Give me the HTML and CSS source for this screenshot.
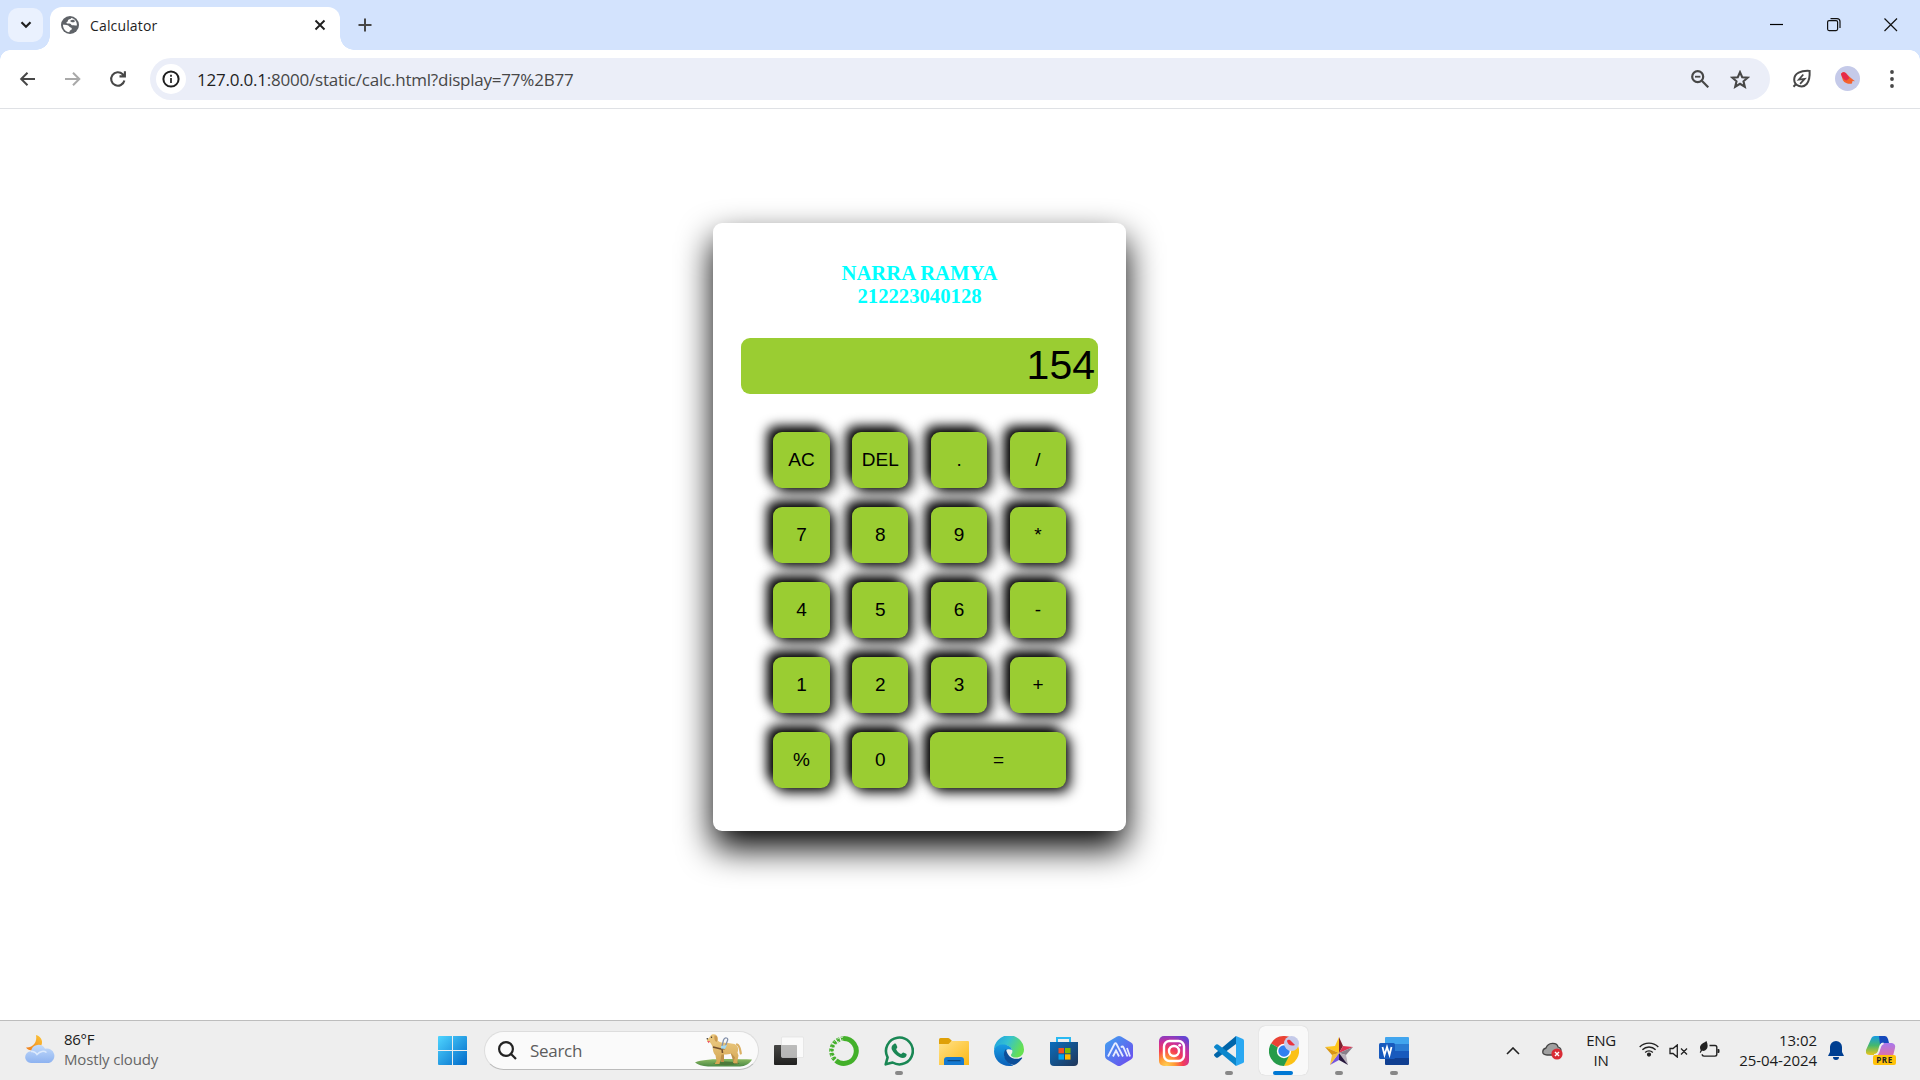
FILE: index.html
```html
<!DOCTYPE html>
<html lang="en">
<head>
<meta charset="utf-8">
<title>Calculator</title>
<link rel="stylesheet" href="styles.css">
</head>
<body>
<header class="tabstrip">
  <div class="tab-search"><svg width="12" height="8" viewBox="0 0 12 8"><path d="M1.500 1.200 6 5.700l4.500-4.500" fill="none" stroke="#1f1f1f" stroke-width="2.200"/></svg></div>
  <div class="tab">
    <svg class="favicon" width="18" height="18" viewBox="0 0 18 18"><circle cx="9" cy="9" r="9" fill="#5f6368"/><path d="M2 8.500C2.300 9 5 8.700 6.600 9.200c1.600.5 1.700 1.900 3 2.200 1.200.3 1.500 1 1 2-.6 1-1.800.7-2 1.800l-.2 1C4.500 16 1.800 12.500 2 8.500z" fill="#fff"/><path d="M10.200 2c-.2 1-1.700 1.300-2.400 1.600-1.500.7-.3 2-1.800 2.400-.9.300-.7 1.500.3 1.500 1.500 0 3-.5 3.500.5.400.9 1.200 1.500 2.400 1.300 1.300-.2 1.600.5 3.700.2C16.200 5.500 13.500 2.500 10.200 2z" fill="#fff"/><path d="M9.500 4.500c1.500-.8 3.500-1.200 4.200.3.600 1.200-.8 1.500-1.800 1.500s-3.300-.7-2.400-1.800z" fill="#5f6368"/></svg>
    <span class="tab-title">Calculator</span>
    <svg class="tab-close" width="12" height="12" viewBox="0 0 12 12"><path d="M1.500 1.500l9 9m0-9l-9 9" stroke="#1f1f1f" stroke-width="1.900"/></svg>
  </div>
  <svg class="new-tab" width="14" height="14" viewBox="0 0 14 14"><path d="M7 .5v13M.5 7h13" stroke="#474747" stroke-width="2"/></svg>
  <div class="window-controls">
    <svg width="14" height="14" viewBox="0 0 14 14"><path d="M0 6.500h13" stroke="#000" stroke-width="1.200"/></svg>
    <svg width="14" height="14" viewBox="0 0 14 14" fill="none" stroke="#111" stroke-width="1.200"><rect x=".6" y="2.600" width="10" height="10" rx="1.500"/><path d="M3.500.6h6.500a3 3 0 0 1 3 3V10"/></svg>
    <svg width="14" height="14" viewBox="0 0 14 14"><path d="M.5.5l12.500 12.500m0-12.500L.5 13" stroke="#111" stroke-width="1.200"/></svg>
  </div>
</header>
<nav class="toolbar">
  <div class="nav-buttons">
    <svg width="18" height="18" viewBox="0 0 18 18" fill="none" stroke="#474747" stroke-width="2"><path d="M16 9H2.500M8.500 2.700 2.200 9l6.300 6.300"/></svg>
    <svg width="18" height="18" viewBox="0 0 18 18" fill="none" stroke="#a9a9a9" stroke-width="2"><path d="M1 9h14M9 2.700 15.300 9 9 15.300"/></svg>
    <svg width="18" height="18" viewBox="0 0 18 18" fill="none" stroke="#474747" stroke-width="2.100"><path d="M15.400 10.500A6.700 6.700 0 1 1 13.700 4.300l1.800 1.800M15.900 1.200v5.200h-5.400"/></svg>
  </div>
  <div class="omnibox">
    <span class="site-info"><svg width="18" height="18" viewBox="0 0 18 18"><circle cx="9" cy="9" r="7.600" fill="none" stroke="#1f1f1f" stroke-width="2"/><path d="M9 8v5M9 4.800v1.900" stroke="#1f1f1f" stroke-width="1.700"/></svg></span>
    <span class="url"><b>127.0.0.1</b>:8000/static/calc.html?display=77%2B77</span>
    <svg class="zoom-icon" width="18" height="18" viewBox="0 0 18 18" fill="none" stroke="#474747" stroke-width="2.200"><circle cx="6.700" cy="6.700" r="5.500"/><path d="M10.800 10.800l6.500 6.500"/><path d="M4 6.700h5.400" stroke-width="1.800"/></svg>
    <svg class="star-icon" width="20" height="19" viewBox="0 0 20 19" fill="none" stroke="#474747" stroke-width="2.100"><path d="M10 2.200l2.200 5 5.500.5-4.200 3.600 1.300 5.400-4.800-2.900-4.800 2.900 1.300-5.400L2.300 7.700l5.500-.5z"/></svg>
  </div>
  <svg class="leaf" width="20" height="20" viewBox="0 0 20 20" fill="none" stroke="#474747" stroke-width="2"><path d="M17.600 1.900C9 1.400 2.200 4 2.200 10.500c0 7 8.800 8.800 12.500 4.500 3-3.500 3.200-8 2.900-13.100zM4.500 14.500l-3 3.200"/><path d="M11.300 5.500 6.800 10.600l5.900-.8-4.600 5" stroke-width="1.700"/></svg>
  <svg class="avatar" width="25" height="25" viewBox="0 0 25 25"><circle cx="12.500" cy="12.500" r="12.500" fill="#c5cae9"/><path d="M6 8c1-2 3.500-2.500 5-.8l4 4 5 4-2.500-.2-.5 2.500c-4 .8-8.500-.5-9.500-4.500z" fill="#f4622e"/><path d="M6 8c1-2 3.500-2.500 5-.8L14.500 12l-3 2.500C8.500 14 7 11 6 8z" fill="#e6294b"/></svg>
  <svg class="menu" width="4" height="18" viewBox="0 0 4 18" fill="#474747"><circle cx="2" cy="2" r="1.900"/><circle cx="2" cy="9" r="1.900"/><circle cx="2" cy="16" r="1.900"/></svg>
</nav>
<main class="page">
  <section class="calculator">
    <h3 class="owner">NARRA RAMYA<br>212223040128</h3>
    <output class="display">154</output>
    <div class="keys">
      <div class="row"><button>AC</button><button>DEL</button><button>.</button><button>/</button></div>
      <div class="row"><button>7</button><button>8</button><button>9</button><button>*</button></div>
      <div class="row"><button>4</button><button>5</button><button>6</button><button>-</button></div>
      <div class="row"><button>1</button><button>2</button><button>3</button><button>+</button></div>
      <div class="row"><button>%</button><button>0</button><button class="equals">=</button></div>
    </div>
  </section>
</main>
<footer class="taskbar">
  <div class="weather">
    <svg width="30" height="30" viewBox="0 0 30 30"><defs><linearGradient id="moon" x1="0" y1="1" x2="1" y2="0"><stop offset="0" stop-color="#f07b1c"/><stop offset="1" stop-color="#fcc735"/></linearGradient><linearGradient id="cloud" x1="0" y1="0" x2="0" y2="1"><stop offset="0" stop-color="#c4dcfb"/><stop offset="1" stop-color="#8db2f0"/></linearGradient></defs><path d="M11 1c6 1.500 8 8 4 12.500S3 17 1 13.500C8 14 12.500 8 11 1z" fill="url(#moon)"/><path d="M6 29a5.800 5.800 0 0 1 0-11.700 7.500 7.500 0 0 1 14-2.500A7.200 7.200 0 0 1 24 29z" fill="url(#cloud)"/><path d="M6 17.500c3-.5 5 1 6 3 3-3.500 7-4 9.500-2" fill="none" stroke="#dceafd" stroke-width="1.500"/></svg>
    <div class="weather-text"><span class="temp">86°F</span><span class="sky">Mostly cloudy</span></div>
  </div>
  <div class="apps">
    <svg class="start" width="29" height="29" viewBox="0 0 29 29"><defs><linearGradient id="win" gradientUnits="userSpaceOnUse" x1="0" y1="0" x2="29" y2="29"><stop offset="0" stop-color="#4fd5ff"/><stop offset="1" stop-color="#0069c9"/></linearGradient></defs><path d="M1 0h13v14H0V1q0-1 1-1zM15 0h13q1 0 1 1v13H15zM0 15h14v14H1q-1 0-1-1zM15 15h14v13q0 1-1 1H15z" fill="url(#win)"/></svg>
    <div class="search">
      <svg width="19" height="19" viewBox="0 0 19 19" fill="none" stroke="#222" stroke-width="2.200"><circle cx="8" cy="8" r="6.900"/><path d="M12.800 12.800l5.200 5.200"/></svg>
      <span>Search</span>
      <svg class="dog" width="57" height="33" viewBox="0 0 57 33"><defs><linearGradient id="grass" x1="0" y1="0" x2="0" y2="1"><stop offset="0" stop-color="#8cba62"/><stop offset="1" stop-color="#4d8a45"/></linearGradient><linearGradient id="fur" x1="0" y1="0" x2="0" y2="1"><stop offset="0" stop-color="#eccb82"/><stop offset="1" stop-color="#d4a552"/></linearGradient></defs><path d="M0 28.500C8 24 40 25 57 25.500c-2 4-7 7-12 7H13C7 32 3 31 0 28.500z" fill="url(#grass)"/><path d="M18 29.500c7-3 20-2.500 27 0-6 2-20 2.500-27 0z" fill="#4d7a3b"/><path d="M35 17l4 12.500h4l-3-10z" fill="#bd9048"/><path d="M24 20l2 8h3l0-8z" fill="#bd9048"/><path d="M14 7.500c2 1.500 2.500 3 3.500 5.500.5 3 .5 6 3 8.500l1 5.500-2 3h5l2-9.500c4 .3 7 0 10-1l3.500 4-2 5.500h4l1.500-7.500-1-3c1.500-3.500.5-7-3-8.500-4-1-9-1-13-1.500-2.500-.5-4.500-2-5-5z" fill="url(#fur)"/><path d="M42 10.500c3 1 3 5 3.800 9" fill="none" stroke="#dbb064" stroke-width="2.200" stroke-linecap="round"/><path d="M12 5c3-.5 3-4.500 6-4.800 4-.3 5.500 3 4.500 7L21 11c-3 0-4-1.500-5-3-2 .3-3.500.2-4-.6z" fill="#e8c47a"/><path d="M19.500 1.500c3-.5 4 3.500 2 6.500-2-1-2.500-3.500-2-6.500z" fill="#cc9b51"/><circle cx="16.500" cy="3.300" r=".7" fill="#333"/><circle cx="12.300" cy="4.700" r=".8" fill="#333"/><path d="M12.500 7H15l-1.500 2.300z" fill="#ef4a70"/><path d="M18 13l8 2 4-.5m-3 .5.500 4" fill="none" stroke="#73502d" stroke-width="1.600"/><path d="M27 12l1.500-6q1-2.700 3-2t.8 3L30 13" fill="none" stroke="#8390aa" stroke-width="1.300"/><path d="M26 12l6-1-2 4-4-.5z" fill="#a4d8f0"/></svg>
    </div>
    <div class="app"><svg width="30" height="30" viewBox="0 0 30 30"><defs><linearGradient id="tv" x1="0" y1="0" x2="0" y2="1"><stop offset="0" stop-color="#474745"/><stop offset="1" stop-color="#20201f"/></linearGradient></defs><rect y="9" width="23" height="20" rx="1" fill="url(#tv)"/><rect x="7.500" y="1" width="22" height="20.500" rx="1" fill="#fff" fill-opacity=".7" stroke="#ddd" stroke-opacity=".6"/><path d="M8 9h15v12.500H8z" fill="#777" opacity=".15"/></svg></div>
    <div class="app"><svg width="30" height="30" viewBox="0 0 30 30" fill="none" stroke="#43b02a"><path d="M15 2.600a12.400 12.400 0 1 1-8 22" stroke-width="5"/><path d="M15 2.600A12.400 12.400 0 0 0 7 24.600" stroke-width="4.500" stroke-dasharray="3 1.300"/><path d="M14 1.200A13.800 13.800 0 0 0 4 23M14 4A11 11 0 0 0 7 22" stroke="#eee" stroke-width=".8" stroke-dasharray="2 2"/></svg></div>
    <div class="app running"><svg width="30" height="30" viewBox="0 0 30 30"><path d="M1.700 28.300l1.900-7A13.400 13.400 0 1 1 8.600 26.500z" fill="none" stroke="#198754" stroke-width="2.600" stroke-linejoin="round"/><path d="M10 8c1-.7 2-.4 2.300.5l1 2.500c.2 1-1.300 1.700-1.100 2.500 1.100 2.200 2.700 3.600 4.800 4.400.8 0 1.500-1.700 2.300-1.500l2.900 1.400c1 .6.200 2.500-.6 3.200-1.700 1.400-4.200 1-6.300 0-3.400-1.600-6-4.300-7.500-7.500C7 11.300 8 9.200 10 8z" fill="#198754"/></svg></div>
    <div class="app"><svg width="30" height="30" viewBox="0 0 30 30"><defs><linearGradient id="folder" x1="0" y1="0" x2="1" y2="1"><stop offset="0" stop-color="#ffe28a"/><stop offset="1" stop-color="#fdb813"/></linearGradient></defs><path d="M0 10V3.500Q0 2 1.500 2H9q1 0 2 1l1.500 1.500V9z" fill="#dfa007"/><path d="M0 8h9.500l3-3H29q1 0 1 1v23H0z" fill="url(#folder)"/><path d="M5 29v-5q0-3 3-3h14q3 0 3 3v5z" fill="#1479d0"/><path d="M9 24.700h12" stroke="#0a4a84" stroke-width="1.200" stroke-linecap="round"/></svg></div>
    <div class="app"><svg width="30" height="30" viewBox="0 0 30 30"><defs><linearGradient id="e1" x1="0" y1="0" x2="1" y2=".4"><stop offset="0" stop-color="#1b9de2"/><stop offset=".5" stop-color="#35c1d0"/><stop offset="1" stop-color="#66e052"/></linearGradient><linearGradient id="e2" x1="0" y1="0" x2="0" y2="1"><stop offset="0" stop-color="#189de3"/><stop offset="1" stop-color="#0a5fb8"/></linearGradient></defs><path d="M0 15a15 15 0 0 1 30-1.500c0 5.500-4 8-8 8-4.500 0-6-2-4.500-3.500C20 15 17 9 10 9 5 9 1 11 0 15z" fill="url(#e1)"/><path d="M0 15C1 10 5 8.500 9 8.500c5 0 8.500 2.500 9 5.500-6-3-9 2.500-7 7.500 1.500 4 5 6.500 8.500 7.900C9 32 0 25 0 15z" fill="url(#e2)"/><path d="M12 13c-5 5-.5 15.500 8 16 4-1.500 6.500-4.500 8-6.500.5-1-.2-1.200-1-.8-6 3-13.500.3-15-8.700z" fill="#0c4e99"/></svg></div>
    <div class="app"><svg width="30" height="30" viewBox="0 0 30 30"><defs><linearGradient id="store" x1="0" y1="0" x2="1" y2="1"><stop offset="0" stop-color="#0a6ebd"/><stop offset="1" stop-color="#203558"/></linearGradient></defs><path d="M8 8V2h13v6" fill="none" stroke="#29b9f2" stroke-width="2"/><path d="M1 6h28v20q0 4-4 4H5q-4 0-4-4z" fill="url(#store)"/><path fill="#f25022" d="M9.500 12H15v5.300H9.500z"/><path fill="#7fba00" d="M16 12h5.500v5.300H16z"/><path fill="#00a4ef" d="M9.500 18.300H15v5.300H9.500z"/><path fill="#ffb900" d="M16 18.300h5.500v5.300H16z"/></svg></div>
    <div class="app"><svg width="30" height="30" viewBox="0 0 30 30"><defs><linearGradient id="am" x1="0" y1="0" x2="1" y2="1"><stop offset="0" stop-color="#3fa4f0"/><stop offset="1" stop-color="#7046ee"/></linearGradient></defs><path d="M13 .5q2-1 4 0l10 6q2 1 2 3V20q0 2.500-2 3.500l-10 6q-2 1-4 0l-10-6q-2-1-2-3.500V9.500q0-2 2-3z" fill="url(#am)"/><path d="M4 20.500 10.500 8q1-1.500 2 0L19 20.500M9 20.500l3-6 3 6M17 11.500q1.500-2 2.500 0l4 9M23 12l3 8.500" fill="none" stroke="#e8edff" stroke-width="1.800"/></svg></div>
    <div class="app"><svg width="30" height="30" viewBox="0 0 30 30"><defs><radialGradient id="ig" cx=".25" cy="1" r="1.100"><stop offset="0" stop-color="#ffd257"/><stop offset=".25" stop-color="#ff9b34"/><stop offset=".5" stop-color="#f53d55"/><stop offset=".75" stop-color="#c72f9f"/><stop offset="1" stop-color="#6544d2"/></radialGradient></defs><rect width="30" height="30" rx="5" fill="url(#ig)"/><g fill="none" stroke="#fff" stroke-width="2.400"><rect x="5" y="5" width="20" height="20" rx="5.500"/><circle cx="15" cy="15" r="5"/></g><circle cx="20.700" cy="9.300" r="1.400" fill="#fff"/></svg></div>
    <div class="app running"><svg width="30" height="30" viewBox="0 0 30 30"><path d="M22 0v8L4 21.500q-1 .7-2 0L.5 20q-1-1 0-2z" fill="#0065a9"/><path d="M22 30v-8L4 8.500q-1-.7-2 0L.5 10q-1 1 0 2z" fill="#0b86cc"/><path d="M22 0l7 3q1 .5 1 1.500v21q0 1-1 1.500l-7 3z" fill="#2aa8f2"/></svg></div>
    <div class="app active"><svg width="30" height="30" viewBox="0 0 30 30"><path d="M15 15 2 7.500A15 15 0 0 1 28 7.500z" fill="#ea4335"/><path d="M15 15 28 7.500A15 15 0 0 1 15 30l4-10z" fill="#fbc116"/><path d="M2 7.500A15 15 0 0 0 15 30l5.500-11L15 15z" fill="#269b4a"/><circle cx="15" cy="15" r="7.200" fill="#fff"/><circle cx="15" cy="15" r="5.700" fill="#2f7ff0"/><circle cx="22.500" cy="7.500" r="7.500" fill="#c5cae9"/><path d="M18 5c1-2 3-1 4 0l4 4c-4 1.500-7 0-8-4z" fill="#e9333e"/></svg></div>
    <div class="app running"><svg width="30" height="30" viewBox="0 0 30 30"><path d="M15 1v16L1 11l10-1z" fill="#ffc61c"/><path d="M15 1l4 9-4 7z" fill="#7b2331"/><path d="M19 10l10 1-14 6z" fill="#df3452"/><path d="M29 11l-7 8-7-2z" fill="#88808b"/><path d="M22 19l2 10-9-12z" fill="#b7afb9"/><path d="M15 17l9 12-9-5z" fill="#27183d"/><path d="M15 17v7l-9 5z" fill="#7655df"/><path d="M15 17 6 29l2-10z" fill="#f5c23c"/><path d="M1 11l14 6-7 2z" fill="#d99613"/></svg></div>
    <div class="app running"><svg width="30" height="30" viewBox="0 0 30 30"><path d="M6 2q0-1 1-1h22q1 0 1 1v6H6z" fill="#41a5ee"/><path d="M6 8h24v7H6z" fill="#2b7cd3"/><path d="M6 15h24v7H6z" fill="#185abd"/><path d="M6 22h24v6q0 1-1 1H7q-1 0-1-1z" fill="#103f91"/><rect y="7" width="16" height="16" rx="1.500" fill="#185abd"/><path d="M3.500 11l2 8 2.500-8 2.500 8 2-8" fill="none" stroke="#fff" stroke-width="1.800"/></svg></div>
  </div>
  <div class="tray">
    <svg class="chevron" width="14" height="8" viewBox="0 0 14 8"><path d="M1 7l6-6 6 6" fill="none" stroke="#222" stroke-width="1.600"/></svg>
    <svg class="onedrive" width="21" height="18" viewBox="0 0 21 18"><path d="M5 13C-1 13 0 7 4 6c2-6 11-6 12-1 3 1 4 3 2 6l-4 2z" fill="#a0a0a0" stroke="#444" stroke-width="1.300"/><circle cx="15" cy="12" r="5.600" fill="#d92c35"/><path d="M13 10l4 4m0-4l-4 4" stroke="#fff" stroke-width="1.400"/></svg>
    <div class="lang"><span>ENG</span><span>IN</span></div>
    <svg class="wifi" width="20" height="16" viewBox="0 0 20 16" fill="none" stroke="#222" stroke-width="1.400"><path d="M.7 6a13 13 0 0 1 18.600 0M3.400 8.800a9.200 9.200 0 0 1 13.200 0M6.200 11.500a5.300 5.300 0 0 1 7.600 0"/><circle cx="10" cy="13.600" r="1.400" fill="#222"/></svg>
    <svg class="sound" width="19" height="14" viewBox="0 0 19 14" fill="none" stroke="#222" stroke-width="1.300"><path d="M1 4.500h3L8.300.9v12.200L4 9.500H1zM12 4.500l6 6m0-6l-6 6"/></svg>
    <svg class="battery" width="21" height="17" viewBox="0 0 21 17"><path d="M10.500 4.500H16q1.800 0 1.800 1.800v7q0 1.800-1.800 1.800H5q-1.800 0-1.800-1.800" fill="none" stroke="#222" stroke-width="1.400"/><path d="M18.500 8h1q1 0 1 1v2q0 1-1 1h-1z" fill="#222"/><path d="M7.500 0c1.500 3.500 2 7.500-1.500 9.500-1 .6-2 .5-3 .3L1.500 12l-.8-.8 1-2C-.8 4 4 2.500 7.500 0z" fill="#222"/></svg>
    <div class="clock"><span>13:02</span><span>25-04-2024</span></div>
    <svg class="bell" width="16" height="19" viewBox="0 0 16 19" fill="#003f91"><path d="M8 0a6 6 0 0 1 6 6v5l2 4H0l2-4V6a6 6 0 0 1 6-6zM5 16h6a3 3 0 0 1-6 0z"/></svg>
    <div class="copilot"><svg width="30" height="26" viewBox="0 0 30 26"><defs><linearGradient id="ca" x1="0" y1="0" x2="0" y2="1"><stop offset="0" stop-color="#159be3"/><stop offset=".5" stop-color="#45b86d"/><stop offset="1" stop-color="#ecc51a"/></linearGradient><linearGradient id="cb" x1="0" y1="0" x2="0" y2="1"><stop offset="0" stop-color="#a878ed"/><stop offset="1" stop-color="#f26c8e"/></linearGradient></defs><path d="M9 0h9l-5 15q-1 4-4 4H4q-5 0-4-5L5 3q1-3 4-3z" fill="url(#ca)"/><path d="M13 0h6q2 0 3 3l1 4h-6q-2 0-3 2z" fill="#1549bb"/><path d="M18 7h8q4 1 3 5l-2 8q-1 5-5 5H9l5-12q1-6 4-6z" fill="url(#cb)"/><path d="M17.500 7.500c-3 0-3.500 3-4.500 7-.7 3-2 4.500-5 4.500" fill="none" stroke="#eee" stroke-width="1.800"/></svg><span class="pre">PRE</span></div>
  </div>
</footer>
</body>
</html>
```
FILE: styles.css
```css
* { box-sizing: border-box; }
body { margin: 0; width: 1920px; height: 1080px; overflow: hidden; display: flex; flex-direction: column; background: #fff; font-family: "Open Sans", "Noto Sans", sans-serif; }
svg { display: block; flex: none; }

/* tab strip */
.tabstrip { height: 50px; flex: none; background: #d3e3fd; display: flex; align-items: flex-start; padding-left: 8px; }
.tab-search { width: 35px; height: 34px; margin-top: 8px; border-radius: 10px; background: #eaf1fe; display: flex; align-items: center; justify-content: center; }
.tab { position: relative; width: 290px; height: 43px; margin: 7px 0 0 7px; padding: 0 14px 7px 11px; border-radius: 12px 12px 0 0; background: #fff; display: flex; align-items: center; }
.tab::before, .tab::after { content: ""; position: absolute; bottom: 0; width: 14px; height: 14px; }
.tab::before { left: -14px; background: radial-gradient(circle at 0 0, transparent 13.5px, #fff 14px); }
.tab::after { right: -14px; background: radial-gradient(circle at 100% 0, transparent 13.5px, #fff 14px); }
.tab-title { margin-left: 11px; font-size: 14px; letter-spacing: .15px; color: #1f1f1f; flex: 1; }
.new-tab { margin: 18px 0 0 18px; }
.window-controls { margin: 18px 22px 0 auto; display: flex; gap: 43px; }

/* toolbar */
.toolbar { height: 59px; flex: none; background: #fff; border-bottom: 1px solid #dfe1e5; display: flex; align-items: center; padding-left: 19px; position: relative; }
.toolbar::before, .toolbar::after { content: ""; position: absolute; top: 0; width: 10px; height: 10px; }
.toolbar::before { left: 0; background: radial-gradient(circle at 100% 100%, transparent 9.5px, #d3e3fd 10px); }
.toolbar::after { right: 0; background: radial-gradient(circle at 0 100%, transparent 9.5px, #d3e3fd 10px); }
.nav-buttons { display: flex; gap: 27px; width: 131px; }
.omnibox { width: 1620px; height: 42px; border-radius: 21px; background: #ebeef8; display: flex; align-items: center; padding: 0 20px 0 6px; }
.site-info { width: 30px; height: 30px; border-radius: 50%; background: #fff; display: flex; align-items: center; justify-content: center; }
.url { margin-left: 11px; font-size: 17px; letter-spacing: -.22px; color: #474747; flex: 1; }
.url b { font-weight: 400; color: #1f1f1f; }
.star-icon { margin-left: 21px; }
.leaf { margin-left: 22px; }
.avatar { margin-left: 23px; margin-top: -1px; }
.menu { margin-left: 30px; }

/* calculator */
.page { flex: 1; display: flex; align-items: flex-start; justify-content: center; padding-top: 114px; padding-right: 81px; }
.calculator { width: 413px; height: 608px; border-radius: 9px; box-shadow: 0 16.875px 33.75px #000; padding: 39px 28px 0; }
.owner { margin: 0; text-align: center; color: #0ff; font: bold 20.7px/23px "Liberation Serif", serif; }
.display { display: block; width: 357px; height: 56px; margin-top: 30px; padding-right: 3px; border-radius: 9px; background: #9acd32; text-align: right; font: 41px/55px "Liberation Sans", sans-serif; color: #000; }
.keys { margin: 38px 32px 0; display: flex; flex-direction: column; gap: 18.75px; }
.row { display: flex; gap: 22.6px; padding-left: .3px; }
.row button { width: 56.25px; height: 56.25px; flex: none; padding: 0; border: 0; border-radius: 9px; background: #9acd32; font: 19px "Liberation Sans", sans-serif; color: #000; box-shadow: -6px -6px 12px #000, 3.6px 3.6px 13px #000; }
.row .equals { width: 136px; margin-left: -.5px; }

/* taskbar */
.taskbar { height: 60px; flex: none; background: #eee; border-top: 1px solid #bdbdbd; display: flex; align-items: center; position: relative; }
.weather { width: 438px; padding-left: 25px; display: flex; gap: 9px; align-items: center; }
.weather svg { margin-top: -3px; }
.weather-text { display: flex; flex-direction: column; margin-top: -4px; font-size: 15px; line-height: 20px; color: #1b1b1b; }
.temp { letter-spacing: -.3px; }
.sky { letter-spacing: -.15px; color: #666; }
.apps { display: flex; align-items: center; }
.start { margin-right: 17px; }
.search { width: 275px; height: 39px; border: 1px solid #ddd; border-bottom-color: #bbb; border-radius: 20px; background: #fafafa; display: flex; align-items: center; padding: 0 6px 0 13px; font-size: 17px; color: #5d5d5d; }
.search span { margin-left: 13px; letter-spacing: -.3px; flex: 1; }
.search + .app { margin-left: 5px; }
.app { position: relative; width: 49px; height: 49px; margin-right: 6px; border-radius: 6px; display: flex; align-items: center; justify-content: center; }
.running::after, .active::after { content: ""; position: absolute; bottom: 0; left: 21px; width: 8px; height: 4px; border-radius: 2px; background: #888; }
.active { background: #f9f9f9; box-shadow: 0 0 1px #bbb; }
.active::after { left: 14px; width: 20px; background: #0078d4; }
.tray { position: absolute; right: 24px; top: 0; height: 59px; display: flex; align-items: center; font-size: 15px; line-height: 20px; color: #1b1b1b; }
.lang, .clock { display: flex; flex-direction: column; margin-top: -2px; white-space: nowrap; }
.lang { width: 32px; margin-left: 22px; align-items: center; letter-spacing: -.3px; }
.onedrive { margin-left: 22px; }
.wifi { margin-left: 22px; margin-top: -3px; }
.sound { margin-left: 10px; }
.battery { margin-left: 11px; margin-top: -3px; }
.clock { width: 78px; margin-left: 19px; align-items: flex-end; letter-spacing: -.05px; }
.bell { margin-left: 11px; }
.copilot { position: relative; width: 30px; height: 29px; margin-left: 22px; }
.pre { position: absolute; right: 0; bottom: 0; width: 23px; height: 10px; border-radius: 2px; background: #ffc20a; color: #222; font: bold 8px/10px "Open Sans", sans-serif; text-align: center; letter-spacing: .5px; }
```
